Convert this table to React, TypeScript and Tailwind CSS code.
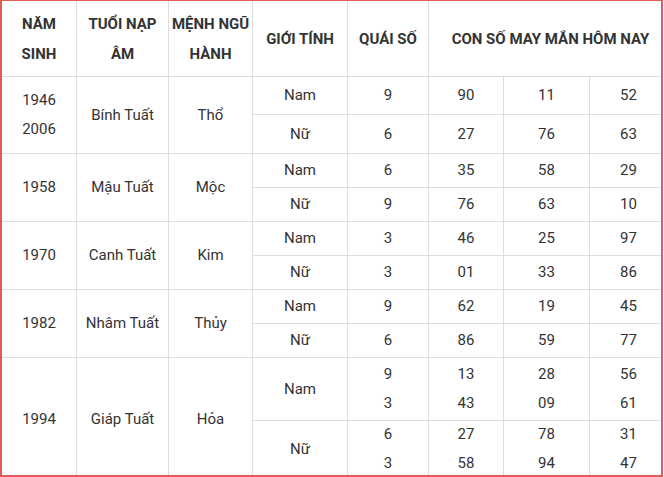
import React from "react"

type Group = {
  year: string[]
  napAm: string
  menh: string
  shift?: string
  rows: { gender: string; quai: string[]; nums: string[][]; shift?: string }[]
}

// Dữ liệu bảng con số may mắn tuổi Tuất
const GROUPS: Group[] = [
  {
    year: ["1946", "2006"],
    napAm: "Bính Tuất",
    menh: "Thổ",
    rows: [
      { gender: "Nam", quai: ["9"], nums: [["90"], ["11"], ["52"]] },
      { gender: "Nữ", quai: ["6"], nums: [["27"], ["76"], ["63"]] },
    ],
  },
  {
    year: ["1958"],
    napAm: "Mậu Tuất",
    menh: "Mộc",
    rows: [
      { gender: "Nam", quai: ["6"], nums: [["35"], ["58"], ["29"]] },
      { gender: "Nữ", quai: ["9"], nums: [["76"], ["63"], ["10"]] },
    ],
  },
  {
    year: ["1970"],
    napAm: "Canh Tuất",
    menh: "Kim",
    rows: [
      { gender: "Nam", quai: ["3"], nums: [["46"], ["25"], ["97"]] },
      { gender: "Nữ", quai: ["3"], nums: [["01"], ["33"], ["86"]] },
    ],
  },
  {
    year: ["1982"],
    napAm: "Nhâm Tuất",
    menh: "Thủy",
    rows: [
      { gender: "Nam", quai: ["9"], nums: [["62"], ["19"], ["45"]] },
      { gender: "Nữ", quai: ["6"], nums: [["86"], ["59"], ["77"]] },
    ],
  },
  {
    year: ["1994"],
    napAm: "Giáp Tuất",
    menh: "Hỏa",
    shift: "pt-[6px]",
    rows: [
      { gender: "Nam", quai: ["9", "3"], nums: [["13", "43"], ["28", "09"], ["56", "61"]] },
      { gender: "Nữ", quai: ["6", "3"], nums: [["27", "58"], ["78", "94"], ["31", "47"]], shift: "pt-[2px]" },
    ],
  },
]

function Cell({ lines, className = "" }: { lines: string[]; className?: string }) {
  return (
    <div className={`bg-white flex flex-col items-center justify-center text-center leading-[29px] ${className}`}>
      {lines.map((l, i) => (
        <span key={i}>{l}</span>
      ))}
    </div>
  )
}

export default function App() {
  return (
    <div className="w-[663px] h-[477px] bg-white border-t border-b-2 border-l-2 border-r-2 border-[#e25b5b] overflow-hidden">
      <div
        className="grid gap-px bg-[#dddddd] text-[15px] text-[#333333] grid-cols-[74px_91px_83px_94px_80px_74px_85px_71px] grid-rows-[75px_37px_38px_33px_33px_33px_33px_33px_33px_62px_54px]"
        style={{ fontFamily: "Roboto, 'Noto Sans', sans-serif" }}
      >
        {/* Tiêu đề */}
        <div className="bg-white flex items-center justify-center text-center font-bold leading-[30px] px-1">NĂM SINH</div>
        <div className="bg-white flex items-center justify-center text-center font-bold leading-[30px] px-1">TUỔI NẠP ÂM</div>
        <div className="bg-white flex items-center justify-center text-center font-bold leading-[30px]">MỆNH NGŨ HÀNH</div>
        <div className="bg-white flex items-center justify-center text-center font-bold leading-[30px]">GIỚI TÍNH</div>
        <div className="bg-white flex items-center justify-center text-center font-bold leading-[30px]">QUÁI SỐ</div>
        <div className="col-span-3 bg-white flex items-center justify-center text-center font-bold leading-[30px] pl-[11px]">
          CON SỐ MAY MẮN HÔM NAY
        </div>

        {GROUPS.map((g) => (
          <React.Fragment key={g.year[0]}>
            <Cell lines={g.year} className={`row-span-2 leading-[28px] ${g.shift ?? ""}`} />
            <Cell lines={[g.napAm]} className={`row-span-2 ${g.shift ?? ""}`} />
            <Cell lines={[g.menh]} className={`row-span-2 ${g.shift ?? ""}`} />
            {g.rows.map((r, ri) => (
              <React.Fragment key={ri}>
                <Cell lines={[r.gender]} className={`col-start-4 ${r.shift ?? ""}`} />
                <Cell lines={r.quai} className={r.shift ?? ""} />
                <Cell lines={r.nums[0]} className={r.shift ?? ""} />
                <Cell lines={r.nums[1]} className={r.shift ?? ""} />
                <Cell lines={r.nums[2]} className={`pl-[6px] ${r.shift ?? ""}`} />
              </React.Fragment>
            ))}
          </React.Fragment>
        ))}
      </div>
    </div>
  )
}
